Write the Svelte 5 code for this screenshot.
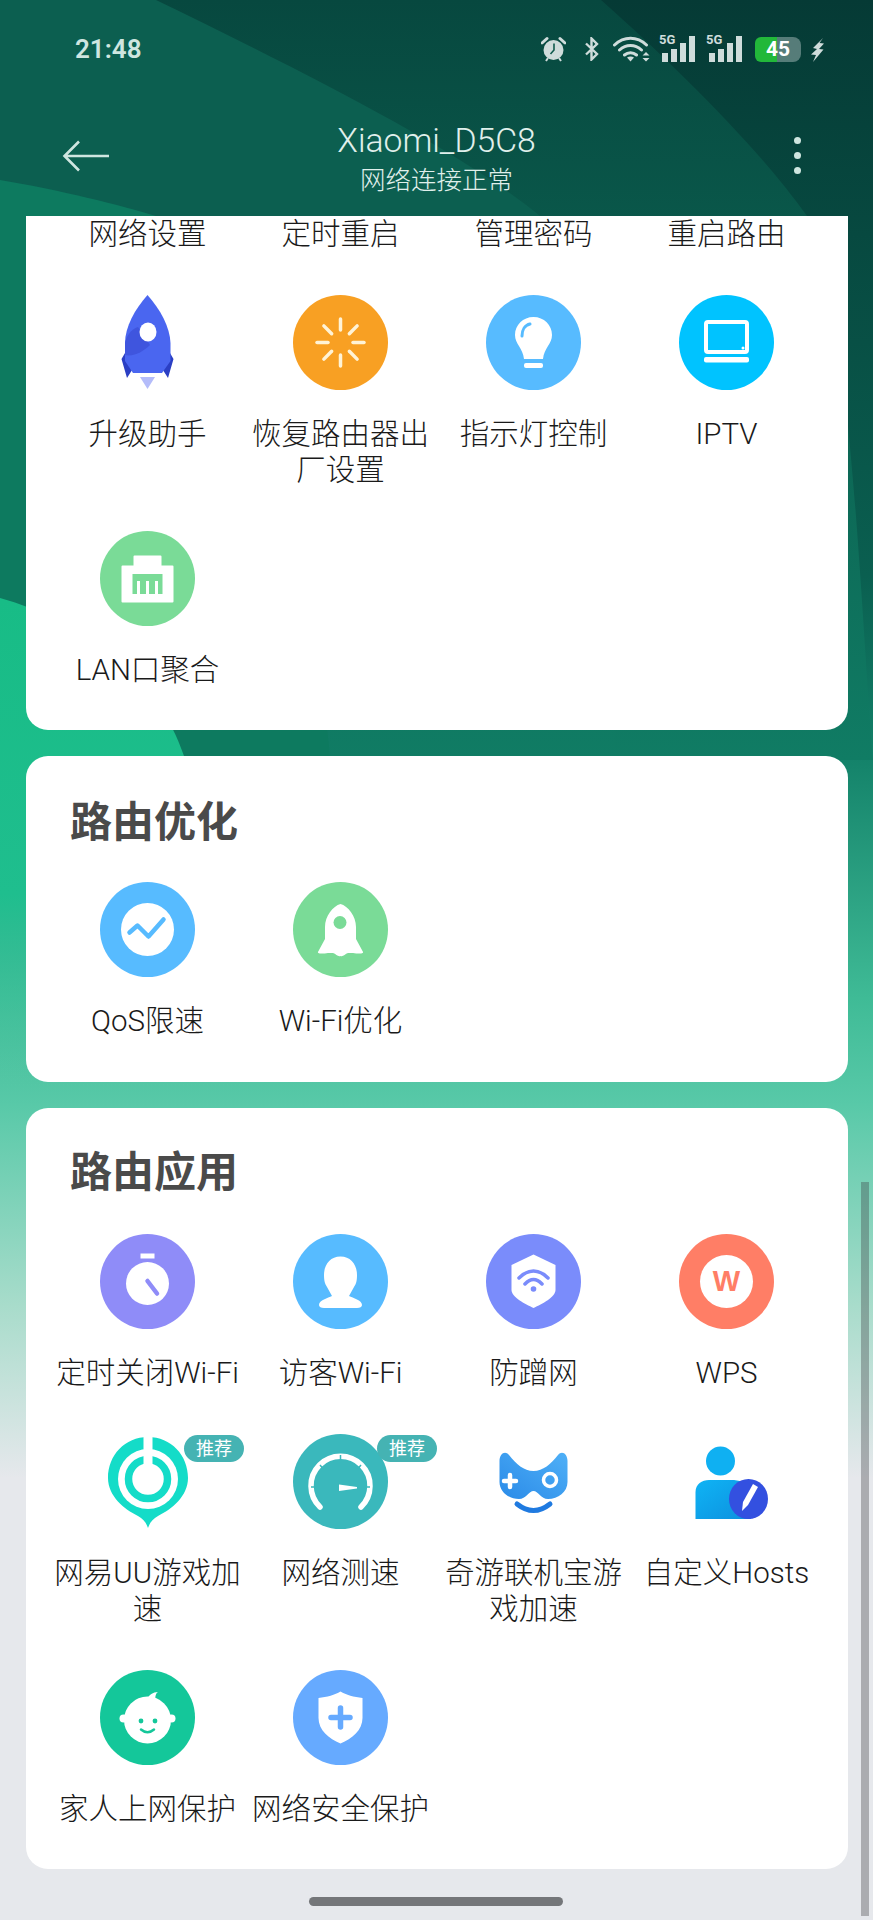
<script>
  const ticks = [0, 45, 90, 135, 180, 225, 270, 315];

  const advanced = [
    { label: '网络设置' },
    { label: '定时重启' },
    { label: '管理密码' },
    { label: '重启路由' },
    { label: '升级助手', icon: 'rocket' },
    { label: '恢复路由器出厂设置', icon: 'reset' },
    { label: '指示灯控制', icon: 'bulb' },
    { label: 'IPTV', icon: 'tv' },
    { label: 'LAN口聚合', icon: 'lan' }
  ];

  const optimize = [
    { label: 'QoS限速', icon: 'qos' },
    { label: 'Wi-Fi优化', icon: 'boost' }
  ];

  const apps = [
    { label: '定时关闭Wi-Fi', icon: 'timer' },
    { label: '访客Wi-Fi', icon: 'guest' },
    { label: '防蹭网', icon: 'shieldwifi' },
    { label: 'WPS', icon: 'wps' },
    { label: '网易UU游戏加速', icon: 'uu', badge: '推荐' },
    { label: '网络测速', icon: 'speed', badge: '推荐' },
    { label: '奇游联机宝游戏加速', icon: 'game' },
    { label: '自定义Hosts', icon: 'hosts' },
    { label: '家人上网保护', icon: 'baby' },
    { label: '网络安全保护', icon: 'shieldplus' }
  ];
</script>

{#snippet icon(name)}
  <svg class="icon" viewBox="0 0 95 95" width="95" height="95">
    {#if name === 'rocket'}
      <path d="M25 58 21.500 64 27 83 34 72Z M70 58 73.500 64 68 83 61 72Z" fill="#2b3fc4" />
      <path d="M47.500 0C60 14 70 32 70.500 48V66L62 78H33L25 66V48C25 32 35 14 47.500 0Z" fill="#4a66f0" />
      <path d="M25 60V48C26 42 31 34 38 32L50 50C44 56 34 62 25 60Z" fill="#3f55de" />
      <ellipse cx="48" cy="37" rx="8.500" ry="9.500" fill="#fff" />
      <path d="M40 82H55L47.500 94Z" fill="#b4bcfa" />
    {:else if name === 'reset'}
      <circle cx="47.500" cy="47.500" r="47.500" fill="#f8a023" />
      {#each ticks as a}
        <line x1="47.500" y1="35" x2="47.500" y2="24" stroke="#fff3d6" stroke-width="3.500" stroke-linecap="round" transform="rotate({a} 47.500 47.500)" />
      {/each}
    {:else if name === 'bulb'}
      <circle cx="47.500" cy="47.500" r="47.500" fill="#57bbff" />
      <path d="M47.500 22C58 22 66 30 66 40C66 49 58 53 57 64H38C37 53 29 49 29 40C29 30 37 22 47.500 22Z" fill="#fff" />
      <path d="M36 41C36 35 39 30 44 29" fill="none" stroke="#57bbff" stroke-width="3" stroke-linecap="round" />
      <rect x="38" y="68" width="19" height="5" rx="2" fill="#fff" />
    {:else if name === 'tv'}
      <circle cx="47.500" cy="47.500" r="47.500" fill="#00c3ff" />
      <rect x="27" y="27" width="41" height="30" rx="2" fill="none" stroke="#fff" stroke-width="4" />
      <circle cx="64" cy="53" r="1.500" fill="#fff" />
      <rect x="25" y="62" width="45" height="5.500" rx="2" fill="#fff" />
    {:else if name === 'lan'}
      <circle cx="47.500" cy="47.500" r="47.500" fill="#7adb97" />
      <path d="M34.500 25.500H60.500V35.500H72.500V70.500H22.500V35.500H34.500Z" fill="#fff" stroke="#fff" stroke-linejoin="round" stroke-width="2" />
      <rect x="32.500" y="43" width="30" height="20" fill="#7adb97" />
      <path d="M38.500 63V50M47.500 63V50M56.500 63V50" stroke="#fff" stroke-width="3" />
    {:else if name === 'qos'}
      <circle cx="47.500" cy="47.500" r="47.500" fill="#57bbff" />
      <circle cx="47.500" cy="47.500" r="26.500" fill="#fff" />
      <path d="M29.500 50.500 37.500 43.500 48.500 54.500 63.500 37.500" fill="none" stroke="#57bbff" stroke-width="4.500" stroke-linecap="round" stroke-linejoin="round" />
    {:else if name === 'boost'}
      <circle cx="47.500" cy="47.500" r="47.500" fill="#7adb97" />
      <path d="M47.500 22C55 24 63 34 63 45V57L69.500 69C72 72 66 72 60 71L55 71C52 72 50 75 47.500 74C45 75 43 72 40 71L35 71C29 72 23 72 25.500 69L32 57V45C32 34 40 24 47.500 22Z" fill="#fff" />
      <circle cx="47" cy="40.500" r="6.500" fill="#7adb97" />
    {:else if name === 'timer'}
      <circle cx="47.500" cy="47.500" r="47.500" fill="#8f8cf8" />
      <rect x="40.500" y="19.500" width="14" height="5" fill="#fff" />
      <circle cx="47.500" cy="49.500" r="21.500" fill="#fff" />
      <line x1="47.500" y1="47" x2="57" y2="59.500" stroke="#8f8cf8" stroke-width="4.500" stroke-linecap="round" />
    {:else if name === 'guest'}
      <circle cx="47.500" cy="47.500" r="47.500" fill="#57bbff" />
      <path d="M47.500 22.500C58 22.500 64 31 64 41C64 47 63 50 61 53L56 62C60 64 69 66 69 71C69 73 67 74 64 74H31C28 74 26 73 26 71C26 66 35 64 39 62L34 53C32 50 31 47 31 41C31 31 37 22.500 47.500 22.500Z" fill="#fff" />
    {:else if name === 'shieldwifi'}
      <circle cx="47.500" cy="47.500" r="47.500" fill="#7a8cfb" />
      <path d="M47.500 20.500 69.500 31V56C69.500 63 56 70 47.500 74C39 70 25.500 63 25.500 56V31Z" fill="#fff" />
      <path d="M33 44Q47.500 30 62 44M39 50Q47.500 41 56 50" fill="none" stroke="#7a8cfb" stroke-width="3.500" stroke-linecap="round" />
      <circle cx="47.500" cy="55" r="2.800" fill="#7a8cfb" />
    {:else if name === 'wps'}
      <circle cx="47.500" cy="47.500" r="47.500" fill="#ff7e66" />
      <circle cx="47.500" cy="47.500" r="26.500" fill="#fff" />
      <text x="47.500" y="57" text-anchor="middle" class="wps-w">W</text>
    {:else if name === 'uu'}
      <path d="M48 3C71 3 88 21 88 44C88 62 72 75 58 82C53 85 50 88 48 94C46 88 43 85 38 82C24 75 8 62 8 44C8 21 25 3 48 3Z" fill="#14dcc8" />
      <circle cx="48" cy="45" r="30" fill="#fff" />
      <circle cx="48" cy="45" r="19.500" fill="none" stroke="#14dcc8" stroke-width="7.500" />
      <rect x="43.500" y="0" width="9" height="30" fill="#fff" />
    {:else if name === 'speed'}
      <circle cx="47.500" cy="47.500" r="47.500" fill="#3ab8bc" />
      <path d="M27 73A29.500 29.500 0 1 1 68 73" fill="none" stroke="#fff" stroke-width="5.500" stroke-linecap="round" />
      <path d="M47.500 21V26M27 31 30 34.500M68 31 65 34.500M18 53H23M72 53H77" stroke="#3ab8bc" stroke-width="1.500" />
      <path d="M46 50.500 64 53V54.500L46 57Z" fill="#fff" />
    {:else if name === 'game'}
      <defs>
        <linearGradient id="game-fill" x1="1" y1="0" x2="0" y2="1">
          <stop offset="0" stop-color="#4fb0f7" />
          <stop offset="1" stop-color="#2b8be8" />
        </linearGradient>
      </defs>
      <path d="M13.500 27C13.500 20 19 16 23 21C30 30 38 37 47.500 37C57 37 65 30 72 21C76 16 81.500 20 81.500 27V48C81.500 58 72 65 62 65C55 65 52 57 47.500 57C43 57 40 65 33 65C23 65 13.500 58 13.500 48Z" fill="url(#game-fill)" />
      <path d="M24 41V53M18 47H30" stroke="#fff" stroke-width="4.500" stroke-linecap="round" />
      <circle cx="64" cy="46" r="6.500" fill="none" stroke="#fff" stroke-width="3.500" />
      <path d="M31 70Q47.500 83 64 70" fill="none" stroke="#1f7ae0" stroke-width="5" stroke-linecap="round" />
    {:else if name === 'hosts'}
      <defs>
        <linearGradient id="hosts-fill" x1="0" y1="0" x2="1" y2="1">
          <stop offset="0" stop-color="#0fb4f5" />
          <stop offset="1" stop-color="#0d90de" />
        </linearGradient>
      </defs>
      <circle cx="41.500" cy="27" r="14.500" fill="#0fb0f2" />
      <path d="M16.500 85V58C16.500 50 23 46 30 46H52C60 46 68 48 72 56V85Z" fill="url(#hosts-fill)" />
      <ellipse cx="69.500" cy="65" rx="19.500" ry="20" fill="#3350e0" />
      <path d="M74 50 79 53 69 71 63 77 64 68Z" fill="#fff" />
    {:else if name === 'baby'}
      <circle cx="47.500" cy="47.500" r="47.500" fill="#14c79a" />
      <circle cx="23.500" cy="48.500" r="4" fill="#fff" />
      <circle cx="71.500" cy="48.500" r="4" fill="#fff" />
      <circle cx="47.500" cy="50" r="23.500" fill="#fff" />
      <path d="M47 29C49 25 53 22 58 22C55 24 55 28 56 31Z" fill="#fff" />
      <circle cx="41" cy="51" r="2.400" fill="#14c79a" />
      <circle cx="55" cy="51" r="2.400" fill="#14c79a" />
      <path d="M41 59.500Q47.500 65 54 59.500" fill="none" stroke="#14c79a" stroke-width="2.500" stroke-linecap="round" />
    {:else if name === 'shieldplus'}
      <circle cx="47.500" cy="47.500" r="47.500" fill="#66aaff" />
      <path d="M47.500 21.500C53 25 61 27 69.500 28V48C69.500 60 59 69 47.500 73.500C36 69 25.500 60 25.500 48V28C34 27 42 25 47.500 21.500Z" fill="#fff" />
      <path d="M47.500 38V57M38 47.500H57" stroke="#66aaff" stroke-width="5.500" stroke-linecap="round" />
    {/if}
  </svg>
{/snippet}

{#snippet signal()}
  <div class="signal">
    <span class="five-g">5G</span>
    <svg viewBox="0 0 38 27" width="38" height="27">
      <rect x="3" y="17" width="6" height="9" fill="#cfdcdb" />
      <rect x="12" y="13" width="6" height="13" fill="#cfdcdb" />
      <rect x="21" y="7" width="6" height="19" fill="#cfdcdb" />
      <rect x="30" y="0" width="6" height="26" fill="#cfdcdb" />
    </svg>
  </div>
{/snippet}

{#snippet grid(items)}
  <div class="grid">
    {#each items as item}
      <div class="item">
        {#if item.icon}
          <div class="icon-wrap">
            {@render icon(item.icon)}
            {#if item.badge}
              <span class="badge">{item.badge}</span>
            {/if}
          </div>
        {/if}
        <div class="label">{item.label}</div>
      </div>
    {/each}
  </div>
{/snippet}

<div class="page">
  <svg class="bg" viewBox="0 0 873 1920" width="873" height="1920" aria-hidden="true">
    <defs>
      <linearGradient id="base" x1="0" y1="0" x2="0" y2="1920" gradientUnits="userSpaceOnUse">
        <stop offset="0" stop-color="#053a35" />
        <stop offset="0.3" stop-color="#0a5f50" />
        <stop offset="0.39" stop-color="#128068" />
        <stop offset="0.52" stop-color="#3fbb96" />
        <stop offset="0.575" stop-color="#58c9a8" />
        <stop offset="0.68" stop-color="#a8dccb" />
        <stop offset="0.77" stop-color="#e6e8ec" />
      </linearGradient>
      <linearGradient id="mid" x1="0" y1="0" x2="0" y2="760" gradientUnits="userSpaceOnUse">
        <stop offset="0" stop-color="#07483f" />
        <stop offset="1" stop-color="#107c64" />
      </linearGradient>
      <linearGradient id="lit" x1="0" y1="0" x2="0" y2="760" gradientUnits="userSpaceOnUse">
        <stop offset="0" stop-color="#0c5f50" />
        <stop offset="0.3" stop-color="#0c5f50" />
        <stop offset="1" stop-color="#107c64" />
      </linearGradient>
      <linearGradient id="bright" x1="0" y1="600" x2="0" y2="1090" gradientUnits="userSpaceOnUse">
        <stop offset="0" stop-color="#18bc86" />
        <stop offset="0.6" stop-color="#1fbe8e" />
        <stop offset="1" stop-color="#58c9a8" stop-opacity="0" />
      </linearGradient>
    </defs>
    <rect width="873" height="1920" fill="url(#base)" />
    <path d="M0 0H601C680 70 760 150 807 216C850 300 860 600 873 760H0Z" fill="url(#mid)" />
    <path d="M0 0H156C300 70 460 150 540 216C600 300 620 600 615 760H0Z" fill="url(#lit)" />
    <path d="M0 180C60 190 120 205 156 216C200 300 320 600 330 760H0Z" fill="#0d7a5f" />
    <path d="M0 598C80 620 160 680 184 756C240 900 240 1000 240 1090H0Z" fill="url(#bright)" />
  </svg>

  <div class="status-bar">
    <span class="time">21:48</span>
    <div class="status-icons">
      <svg class="alarm" viewBox="0 0 25 26" width="25" height="26">
        <circle cx="12.500" cy="14" r="10" fill="#cfdcdb" />
        <path d="M1 7 6 2.500M24 7 19 2.500" stroke="#cfdcdb" stroke-width="3" stroke-linecap="round" />
        <path d="M5 25 7 22M20 25 18 22" stroke="#cfdcdb" stroke-width="2" />
        <path d="M13 7.500V14L9.500 18" fill="none" stroke="#0f5a4d" stroke-width="1.600" />
      </svg>
      <svg class="bt" viewBox="0 0 15 24" width="15" height="24">
        <path d="M2 6.500 13 17 7.500 22.500V1.500L13 7 2 17.500" fill="none" stroke="#cfdcdb" stroke-width="2.400" />
      </svg>
      <svg viewBox="0 0 37 26" width="37" height="26">
        <path d="M1.500 9C11 0 24 0 33.500 9M6.500 14C13 8 22 8 28.500 14M11.500 19C15 16 20 16 23.500 19" fill="none" stroke="#cfdcdb" stroke-width="3" stroke-linecap="round" />
        <path d="M17.500 25.500 14 21.500C16 20 19 20 21 21.500Z" fill="#cfdcdb" />
        <path d="M33 16 36.500 19.500H29.500ZM33 25.500 29.500 22H36.500Z" fill="#cfdcdb" />
      </svg>
      {@render signal()}
      {@render signal()}
      <div class="battery">
        <span class="battery-fill"></span>
        <span class="battery-rest"></span>
        <span class="battery-num">45</span>
      </div>
      <svg viewBox="0 0 14 25" width="14" height="25">
        <path d="M13 1 3 11 7 12 1 17.500 6 18 3 25 13.500 12.500 9 12 14 6.500 9.500 6Z" fill="#cfdcdb" />
      </svg>
    </div>
  </div>

  <header class="header">
    <svg class="back" viewBox="0 0 48 32" width="48" height="32">
      <path d="M47 16H3M17 1.500 2.500 16 17 30.500" fill="none" stroke="#cfe6e0" stroke-width="2.600" />
    </svg>
    <div class="titles">
      <div class="title">Xiaomi_D5C8</div>
      <div class="subtitle">网络连接正常</div>
    </div>
    <div class="more"><i></i><i></i><i></i></div>
  </header>

  <main class="content">
    <section class="card first">
      {@render grid(advanced)}
    </section>
    <section class="card">
      <h2>路由优化</h2>
      {@render grid(optimize)}
    </section>
    <section class="card last">
      <h2>路由应用</h2>
      {@render grid(apps)}
    </section>
  </main>

  <div class="scrollbar"></div>
  <div class="home-indicator"></div>
</div>

<style>
  :global(body) {
    margin: 0;
  }
  .page {
    position: relative;
    width: 873px;
    height: 1920px;
    overflow: hidden;
    font-family: Roboto, "Noto Sans CJK SC", sans-serif;
    background: #e6e8ec;
  }
  .bg {
    position: absolute;
    inset: 0;
  }
  .status-bar {
    position: relative;
    height: 98px;
    display: flex;
    align-items: center;
    justify-content: space-between;
    padding: 0 49px 0 75px;
    color: #cfe6e0;
  }
  .time {
    font-size: 26px;
    font-weight: 600;
  }
  .status-icons {
    display: flex;
    align-items: center;
    gap: 9px;
  }
  .alarm {
    margin-right: 9px;
  }
  .bt {
    margin-right: 5px;
  }
  .signal {
    position: relative;
    width: 38px;
    height: 27px;
  }
  .five-g {
    position: absolute;
    left: 0;
    top: -3px;
    font-size: 13px;
    font-weight: 700;
    line-height: 14px;
    color: #cfdcdb;
  }
  .battery {
    position: relative;
    width: 46px;
    height: 25px;
    margin-left: 2px;
    display: flex;
  }
  .battery-fill {
    width: 22px;
    background: #22b83a;
    border-radius: 6px 0 0 6px;
  }
  .battery-rest {
    flex: 1;
    background: rgba(207, 220, 219, 0.4);
    border-radius: 0 8px 8px 0;
  }
  .battery-num {
    position: absolute;
    inset: 0;
    text-align: center;
    font-size: 21px;
    font-weight: 700;
    line-height: 25px;
    color: #fff;
  }
  .header {
    position: relative;
    height: 118px;
    display: grid;
    grid-template-columns: 1fr auto 1fr;
    align-items: start;
    padding: 0 62px;
    color: #e0f0ec;
  }
  .back {
    margin-top: 42px;
  }
  .titles {
    text-align: center;
    margin-top: 22px;
  }
  .title {
    font-size: 33.7px;
    line-height: 42px;
    font-weight: 300;
  }
  .subtitle {
    font-size: 25.500px;
    line-height: 36px;
    font-weight: 300;
  }
  .more {
    justify-self: end;
    display: flex;
    flex-direction: column;
    gap: 8px;
    margin: 39px 10px 0 0;
  }
  .more i {
    width: 7px;
    height: 7px;
    border-radius: 50%;
    background: #cfe6e0;
  }
  .content {
    position: relative;
    display: flex;
    flex-direction: column;
    gap: 26px;
    padding: 0 25px 0 26px;
  }
  .card {
    background: #fff;
    border-radius: 22px;
    padding: 42px 0 43px;
  }
  .card.first {
    border-radius: 0 0 22px 22px;
    padding: 0 0 42px;
  }
  .card.last {
    padding: 40px 0 42px;
  }
  .card.last h2 {
    margin-bottom: 36px;
  }
  h2 {
    margin: 0 0 34px 44px;
    font-size: 42px;
    line-height: 50px;
    font-weight: 700;
    color: #4a4a4a;
  }
  .grid {
    display: grid;
    grid-template-columns: repeat(4, 193px);
    row-gap: 43px;
    padding-left: 25px;
  }
  .item {
    display: flex;
    flex-direction: column;
    align-items: center;
  }
  .icon-wrap {
    position: relative;
    width: 95px;
    height: 95px;
    margin-bottom: 26px;
  }
  .icon {
    display: block;
  }
  .wps-w {
    font-family: "Liberation Sans", sans-serif;
    font-size: 29px;
    font-weight: 700;
    fill: #ff7e66;
  }
  .badge {
    position: absolute;
    left: 84px;
    top: 1px;
    width: 60px;
    height: 27px;
    border-radius: 14px;
    background: #45b3b3;
    color: #fff;
    font-size: 18px;
    line-height: 27px;
    text-align: center;
  }
  .label {
    width: 193px;
    font-size: 29.500px;
    line-height: 36px;
    text-align: center;
    color: #1a1a1a;
    font-weight: 300;
  }
  .scrollbar {
    position: absolute;
    left: 861px;
    top: 1182px;
    width: 8px;
    height: 734px;
    background: rgba(60, 60, 65, 0.35);
  }
  .home-indicator {
    position: absolute;
    left: 309px;
    top: 1897px;
    width: 254px;
    height: 9px;
    border-radius: 5px;
    background: #747679;
  }
</style>
